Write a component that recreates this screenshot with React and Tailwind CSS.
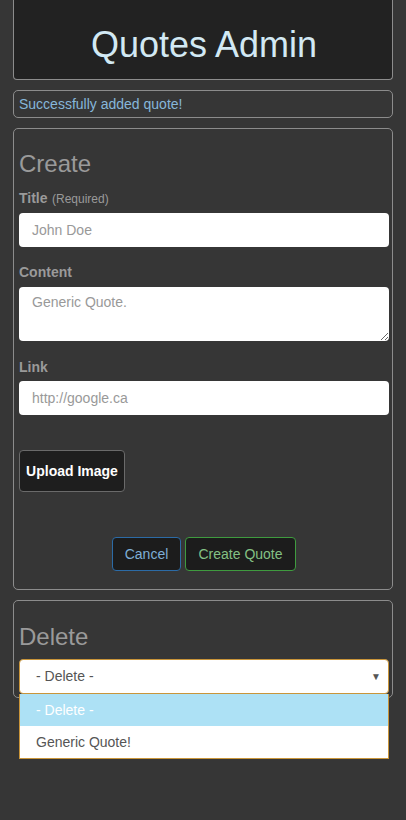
export default function App() {
  const font = { fontFamily: '"Liberation Sans", Arial, sans-serif' };
  return (
    <div className="min-h-[820px] bg-[#363636] px-[13px]" style={font}>
      {/* Header */}
      <div className="h-[80px] border border-t-0 border-[#8c8c8c] rounded-b-[4px] bg-[#222222] flex items-center justify-center pt-[10px] pl-[2px]">
        <h1 className="text-[36px] leading-[40px] text-[#d2e9f4] font-normal">Quotes Admin</h1>
      </div>

      {/* Alert */}
      <div className="mt-[10px] h-[28px] border border-[#8c8c8c] rounded-[5px] flex items-center px-[5px]">
        <span className="text-[14px] text-[#86b6da]">Successfully added quote!</span>
      </div>

      {/* Create panel */}
      <div className="mt-[10px] border border-[#8c8c8c] rounded-[5px] pl-[5px] pr-[3px] pb-[18px]">
        <h2 className="mt-[22px] text-[24px] leading-[26px] text-[#9a9a9a] font-normal">Create</h2>
        <div className="mt-[11px] h-[20px] leading-[20px] text-[#9a9a9a]">
          <span className="text-[14px] font-bold">Title</span>{" "}
          <span className="text-[12px]">(Required)</span>
        </div>
        <div className="mt-[5px] h-[34px] bg-white rounded-[4px] flex items-center px-[13px] text-[14px] text-[#999]">
          John Doe
        </div>

        <div className="mt-[15px] h-[20px] leading-[20px] text-[14px] font-bold text-[#9a9a9a]">Content</div>
        <textarea
          className="mt-[5px] block w-full h-[54px] bg-white rounded-[4px] px-[13px] py-[5px] text-[14px] leading-[20px] text-[#555] placeholder:text-[#999] outline-none"
          style={font}
          placeholder="Generic Quote."
        />

        <div className="mt-[16px] h-[20px] leading-[20px] text-[14px] font-bold text-[#9a9a9a]">Link</div>
        <div className="mt-[4px] h-[34px] bg-white rounded-[4px] flex items-center px-[13px] text-[14px] text-[#999]">
          http://google.ca
        </div>

        <div className="mt-[35px] h-[42px] w-[106px] bg-[#1e1e1e] border border-[#6a6a6a] rounded-[4px] flex items-center justify-center text-[14px] font-bold text-white">
          Upload Image
        </div>

        <div className="mt-[45px] flex justify-center gap-[4px]">
          <div className="h-[34px] w-[69px] bg-[#1c1c1c] border border-[#2c6ba6] rounded-[4px] flex items-center justify-center text-[14px] text-[#7eaed6]">
            Cancel
          </div>
          <div className="h-[34px] w-[111px] bg-[#1c1c1c] border border-[#3f9b3f] rounded-[4px] flex items-center justify-center text-[14px] text-[#84c184]">
            Create Quote
          </div>
        </div>
      </div>

      {/* Delete panel */}
      <div className="mt-[10px] border border-[#8c8c8c] rounded-[5px] pl-[5px] pr-[3px] pb-[3px]">
        <h2 className="mt-[23px] text-[24px] leading-[26px] text-[#9a9a9a] font-normal">Delete</h2>
        <div className="relative mt-[9px]">
          <div className="h-[35px] bg-white border-[1.5px] border-[#c9953a] rounded-[4px] flex items-center justify-between pl-[16px] pr-[7px] text-[14px] text-[#555]">
            <span>- Delete -</span>
            <span className="text-[10px] text-[#555]">▼</span>
          </div>
          <div className="absolute left-0 right-0 top-[35px] border border-t-0 border-[#c9953a] bg-white z-10">
            <div className="h-[32px] bg-[#ade1f5] flex items-center pl-[16px] text-[14px] text-white">- Delete -</div>
            <div className="h-[32px] bg-white flex items-center pl-[16px] text-[14px] text-[#555]">Generic Quote!</div>
          </div>
        </div>
      </div>
    </div>
  );
}
